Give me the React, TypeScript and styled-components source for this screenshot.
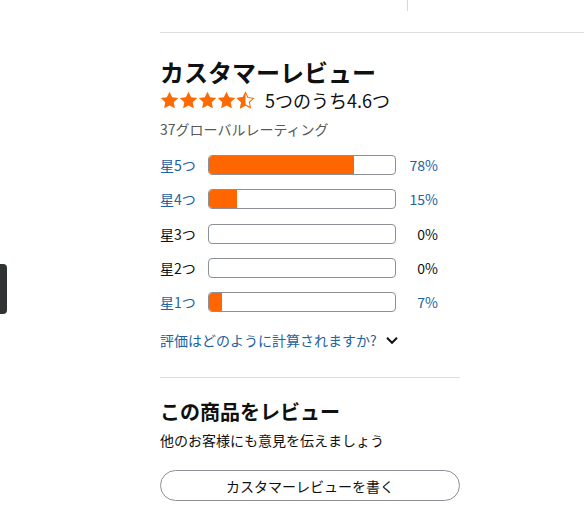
import React from "react";
import styled, { createGlobalStyle } from "styled-components";

const GlobalStyle = createGlobalStyle`
  body {
    margin: 0;
    background: #fff;
    font-family: "Noto Sans CJK JP", "Noto Sans", Arial, sans-serif;
    color: #0f1111;
  }
`;

type Row = { label: string; pct: number; linked: boolean };

const rows: Row[] = [
  { label: "星5つ", pct: 78, linked: true },
  { label: "星4つ", pct: 15, linked: true },
  { label: "星3つ", pct: 0, linked: false },
  { label: "星2つ", pct: 0, linked: false },
  { label: "星1つ", pct: 7, linked: true },
];

const StarIcon = ({ fill }: { fill: "full" | "half" }) => (
  <svg width="19" height="18" viewBox="0 0 24 23">
    <defs>
      <clipPath id="halfclip">
        <rect x="0" y="0" width="12" height="23" />
      </clipPath>
    </defs>
    {fill === "full" ? (
      <path
        d="M12 0.8l3.4 7.2 7.8 1-5.8 5.4 1.5 7.8L12 18.4l-6.9 3.8 1.5-7.8L0.8 9l7.8-1z"
        fill="#ff6a00"
      />
    ) : (
      <>
        <path
          d="M12 1.8l3.1 6.6 7.1 0.9-5.3 4.9 1.4 7.1L12 17.8l-6.3 3.5 1.4-7.1L1.8 9.3l7.1-0.9z"
          fill="none"
          stroke="#ff6a00"
          strokeWidth="1.3"
        />
        <path
          d="M12 0.8l3.4 7.2 7.8 1-5.8 5.4 1.5 7.8L12 18.4l-6.9 3.8 1.5-7.8L0.8 9l7.8-1z"
          fill="#ff6a00"
          clipPath="url(#halfclip)"
        />
      </>
    )}
  </svg>
);

export default function App() {
  return (
    <>
      <GlobalStyle />
      <Page>
        <EdgeTab />
        <TopStrip>
          <TopTick />
        </TopStrip>
        <Column>
          <Title>カスタマーレビュー</Title>
          <RatingLine>
            <Stars>
              <StarIcon fill="full" />
              <StarIcon fill="full" />
              <StarIcon fill="full" />
              <StarIcon fill="full" />
              <StarIcon fill="half" />
            </Stars>
            <RatingText>5つのうち4.6つ</RatingText>
          </RatingLine>
          <TotalText>37グローバルレーティング</TotalText>
          <Histogram>
            {rows.map((r) => (
              <HistRow key={r.label}>
                <RowLabel $linked={r.linked}>{r.label}</RowLabel>
                <Meter>
                  {r.pct > 0 && <MeterFill style={{ width: `${r.pct}%` }} />}
                </Meter>
                <RowPct $linked={r.linked}>{r.pct}%</RowPct>
              </HistRow>
            ))}
          </Histogram>
          <HowLink>
            評価はどのように計算されますか?
            <svg width="14" height="14" viewBox="0 0 14 14">
              <path
                d="M2 4.8l5 5 5-5"
                fill="none"
                stroke="#0f1111"
                strokeWidth="2"
              />
            </svg>
          </HowLink>
          <Divider />
          <SubTitle>この商品をレビュー</SubTitle>
          <Prompt>他のお客様にも意見を伝えましょう</Prompt>
          <WriteButton>カスタマーレビューを書く</WriteButton>
        </Column>
      </Page>
    </>
  );
}

const Page = styled.div`
  position: relative;
  width: 584px;
  height: 518px;
  overflow: hidden;
`;

const EdgeTab = styled.div`
  position: absolute;
  left: 0;
  top: 264px;
  width: 7px;
  height: 50px;
  background: #303333;
  border-radius: 0 4px 4px 0;
`;

const TopStrip = styled.div`
  margin-left: 160px;
  height: 32px;
  border-bottom: 1px solid #dddddd;
  display: flex;
`;

const TopTick = styled.div`
  margin-left: 247px;
  width: 1px;
  height: 11px;
  background: #d5d9d9;
`;

const Column = styled.div`
  margin-left: 160px;
  width: 300px;
  display: flex;
  flex-direction: column;
`;

const Title = styled.h2`
  margin: 24px 0 0;
  font-size: 24px;
  line-height: 30px;
  font-weight: 700;
  color: #0f1111;
`;

const RatingLine = styled.div`
  display: flex;
  align-items: center;
  height: 26px;
`;

const Stars = styled.div`
  display: flex;
  width: 105px;
`;

const RatingText = styled.span`
  font-size: 18px;
  color: #0f1111;
`;

const TotalText = styled.div`
  margin-top: 6px;
  font-size: 14px;
  line-height: 20px;
  color: #565959;
`;

const Histogram = styled.div`
  margin-top: 16px;
  display: flex;
  flex-direction: column;
  gap: 14.25px;
`;

const HistRow = styled.div`
  display: flex;
  align-items: center;
  height: 20px;
`;

const RowLabel = styled.span<{ $linked: boolean }>`
  width: 48px;
  font-size: 14px;
  color: ${(p) => (p.$linked ? "#2162a1" : "#0f1111")};
`;

const Meter = styled.div`
  width: 188px;
  height: 20px;
  box-sizing: border-box;
  border: 1px solid #8d9096;
  border-radius: 4px;
  overflow: hidden;
  background: #fff;
`;

const MeterFill = styled.div`
  height: 100%;
  background: #ff6600;
  border-radius: 3px 0 0 3px;
`;

const RowPct = styled.span<{ $linked: boolean }>`
  width: 42px;
  text-align: right;
  font-size: 14px;
  color: ${(p) => (p.$linked ? "#2162a1" : "#0f1111")};
`;

const HowLink = styled.div`
  margin-top: 18px;
  display: flex;
  align-items: center;
  gap: 8px;
  font-size: 14px;
  line-height: 20px;
  color: #2162a1;
`;

const Divider = styled.div`
  margin-top: 27px;
  height: 1px;
  background: #dddddd;
`;

const SubTitle = styled.h3`
  margin: 21px 0 0;
  font-size: 20px;
  line-height: 26px;
  font-weight: 700;
  color: #0f1111;
`;

const Prompt = styled.div`
  margin-top: 5px;
  font-size: 14px;
  line-height: 20px;
  color: #0f1111;
`;

const WriteButton = styled.button`
  margin-top: 20px;
  width: 300px;
  height: 31px;
  border: 1px solid #8d9096;
  border-radius: 16px;
  background: #fff;
  font-family: inherit;
  font-size: 14px;
  color: #0f1111;
`;
